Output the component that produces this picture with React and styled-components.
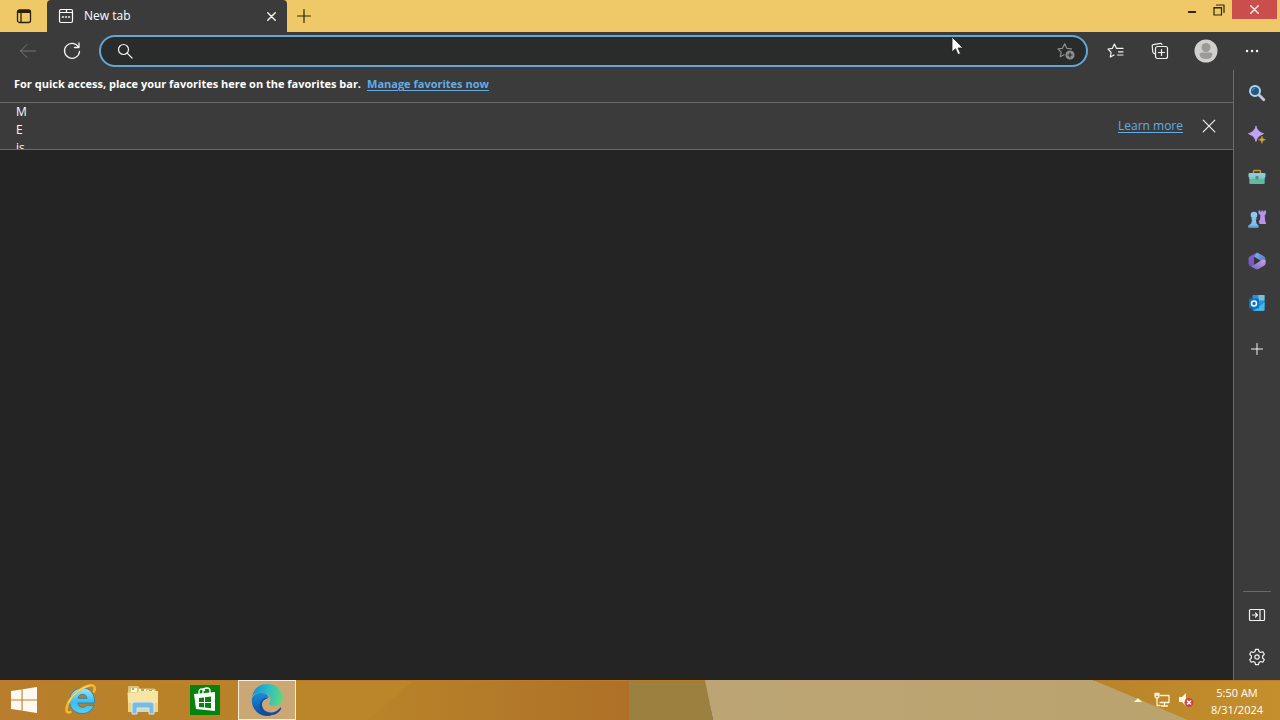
import React from 'react';
import styled, { createGlobalStyle } from 'styled-components';

const GlobalStyle = createGlobalStyle`
  *, *::before, *::after { box-sizing: border-box; }
  body {
    margin: 0;
    background: #242424;
    color: #fff;
    font: 12px/18px "Open Sans", "Noto Sans", sans-serif;
  }
  button, input { font: inherit; color: inherit; }
  svg { display: block; flex: none; }
`;

const Desktop = styled.div`
  display: flex;
  flex-direction: column;
  min-height: 100vh;
  position: relative;
`;

const IconButton = styled.button`
  display: flex;
  align-items: center;
  justify-content: center;
  flex: none;
  width: ${p => p.$w || 32}px;
  height: ${p => p.$h || 32}px;
  padding: 0;
  border: 0;
  background: ${p => p.$bg || 'transparent'};
  color: ${p => p.$color || '#f2f2f2'};
`;

const TabStrip = styled.header`
  display: flex;
  height: 32px;
  background: #efc867;
`;

const Tab = styled.div`
  display: flex;
  align-items: center;
  gap: 10px;
  width: 240px;
  padding-left: 11px;
  margin-right: 1px;
  border-radius: 4px 4px 0 0;
  background: #3b3b3b;
`;

const TabTitle = styled.span`
  flex: 1;
`;

const WindowControls = styled.div`
  display: flex;
  align-items: flex-start;
  margin-left: auto;
  padding-right: 3px;
`;

const Toolbar = styled.div`
  display: flex;
  align-items: center;
  height: 38px;
  padding: 0 6px;
  background: #3b3b3b;
`;

const NavButtons = styled.div`
  display: flex;
  width: 93px;
`;

const AddressBox = styled.div`
  display: flex;
  align-items: center;
  flex: 1;
  min-width: 0;
  height: 32px;
  padding: 0 4px 0 8px;
  border: 2px solid #65a7d4;
  border-radius: 16px;
  background: #2a2b2b;
`;

const AddressInput = styled.input`
  flex: 1;
  min-width: 0;
  height: 24px;
  border: 0;
  outline: 0;
  background: transparent;
`;

const ToolButtons = styled.div`
  display: flex;
  padding-left: 6px;
`;

const Body = styled.div`
  display: flex;
  flex: 1;
`;

const Page = styled.main`
  flex: 1;
  min-width: 0;
`;

const FavoritesBar = styled.div`
  display: flex;
  align-items: center;
  gap: 6px;
  height: 33px;
  padding: 0 14px 4px;
  border-bottom: 1px solid #6b6b6b;
  background: #3b3b3b;
  font-size: 11px;
  font-weight: 700;
`;

const Link = styled.a`
  color: #63ace5;
  text-decoration: underline;
  text-underline-offset: 2px;
`;

const InfoBar = styled.div`
  display: flex;
  align-items: center;
  height: 47px;
  padding: 0 8px 0 16px;
  border-bottom: 1px solid #6b6b6b;
  background: #3b3b3b;
  overflow: hidden;
`;

const InfoText = styled.p`
  align-self: flex-start;
  width: 12px;
  margin: 0 auto 0 0;
`;

const InfoLink = styled(Link)`
  margin-right: 10px;
`;

const Sidebar = styled.aside`
  display: flex;
  flex-direction: column;
  align-items: center;
  flex: none;
  width: 47px;
  padding: 2px 0;
  border-left: 1px solid #6b6b6b;
  background: #3b3b3b;
`;

const AppList = styled.nav`
  display: flex;
  flex-direction: column;
  margin-bottom: 4px;
`;

const SideFooter = styled.div`
  display: flex;
  flex-direction: column;
  align-items: center;
  margin-top: auto;
`;

const Divider = styled.hr`
  width: 28px;
  margin: 0 0 2px;
  border: 0;
  border-top: 1px solid #686868;
`;

const Taskbar = styled.footer`
  display: flex;
  position: relative;
  height: 40px;
`;

const Wallpaper = styled.svg`
  position: absolute;
  inset: 0;
  width: 100%;
  height: 100%;
`;

const TaskButtons = styled.div`
  display: flex;
  position: relative;
  gap: 4px;
`;

const TaskButton = styled.button`
  display: flex;
  align-items: center;
  justify-content: center;
  width: ${p => p.$w || 58}px;
  padding: 0;
  border: ${p => (p.$active ? '1px solid #f8eedc' : '0')};
  background: ${p => (p.$active ? '#cba776' : 'transparent')};
`;

const Tray = styled.div`
  display: flex;
  position: relative;
  align-items: center;
  margin-left: auto;
  padding-right: 4px;
`;

const Clock = styled.time`
  width: 78px;
  padding-top: 2px;
  text-align: center;
  font-size: 11px;
  line-height: 17px;
`;

const Pointer = styled.svg`
  position: absolute;
  left: 951px;
  top: 36px;
`;

function Line({ size = 18, box = 18, w = 1, children }) {
  return (
    <svg width={size} height={size} viewBox={`0 0 ${box} ${box}`} fill="none" stroke="currentColor"
      strokeWidth={w} strokeLinecap="round" strokeLinejoin="round" aria-hidden="true">
      {children}
    </svg>
  );
}

const Cross = ({ size, w }) => (
  <Line size={size} box={12} w={w}><path d="M1 1l10 10M11 1L1 11" /></Line>
);

function SearchColor() {
  return (
    <svg width="18" height="18" viewBox="0 0 18 18">
      <path d="M10.8 10.8l5 5" stroke="#c9c4dc" strokeWidth="2.8" strokeLinecap="round" />
      <circle cx="7" cy="7" r="5" fill="#2b567a" stroke="#a9d7f5" strokeWidth="2" />
      <path d="M4.5 7A2.6 2.6 0 0 1 7 4.4" stroke="#4da3dd" fill="none" />
    </svg>
  );
}

function Sparkle() {
  return (
    <svg width="18" height="18" viewBox="0 0 18 18">
      <path d="M8 0c.9 4 3 6.100 7.500 7.700C11 9.500 9 11.500 8 15.500 7 11.500 5 9.500.5 7.700 5 6.100 7.100 4 8 0z" fill="#c3a3f4" stroke="#c3a3f4" strokeWidth=".8" strokeLinejoin="round" />
      <path d="M14 10c.4 2.400 1.200 3.200 3.500 3.700-2.300.5-3.100 1.300-3.500 3.800-.4-2.500-1.200-3.300-3.500-3.800 2.300-.5 3.100-1.300 3.500-3.700z" fill="#c9a13a" stroke="#c9a13a" strokeWidth=".5" />
    </svg>
  );
}

function Toolbox() {
  return (
    <svg width="18" height="18" viewBox="0 0 18 18">
      <path d="M5.500 5V3.500Q5.500 2.500 6.500 2.500h5q1 0 1 1V5" fill="none" stroke="#b69b45" strokeWidth="1.500" />
      <rect x=".5" y="5" width="17" height="4.500" rx="1" fill="#90c9d8" />
      <path d="M1.300 9h15.400v6q0 1-1 1H2.300q-1 0-1-1z" fill="#62b99d" />
      <path d="M1.300 9h15.400v2H1.300z" fill="#7bc6c0" />
      <rect x="7.500" y="8" width="3" height="3.500" rx=".6" fill="#46977f" />
    </svg>
  );
}

function Games() {
  return (
    <svg width="18" height="18" viewBox="0 0 18 18">
      <path d="M10.500.5h1.800v1.300h1.200V.5h1.800v1.300h.9V.5H18v3.300l-1.300 1.400.5 6.300.8 1.200v1.300h-6.500L10.800 11l1.200-1 .4-4.800-1.900-1.700z" fill="#b993ea" />
      <circle cx="6" cy="5" r="3.300" fill="#8bcaf0" />
      <path d="M3.500 8h5v1.600H7.800l.7 4 1.900 1.800v2.100H.5v-2.100l2.700-1.800 1-4h-.7z" fill="#83c1ec" />
      <path d="M.5 15.500h9.900v2H.5z" fill="#5ba8df" />
    </svg>
  );
}

function Office() {
  return (
    <svg width="18" height="18" viewBox="0 0 18 18">
      <defs>
        <linearGradient id="officeTop" x1="0" y1="0" x2="0" y2="1">
          <stop offset="0" stopColor="#7a67cf" /><stop offset="1" stopColor="#7b4fba" />
        </linearGradient>
        <linearGradient id="officeLow" x1="0" y1="1" x2="1" y2="0">
          <stop offset="0" stopColor="#6d62c8" /><stop offset="1" stopColor="#cfa5de" />
        </linearGradient>
        <linearGradient id="officeRight" x1="0" y1="0" x2="1" y2="1">
          <stop offset="0" stopColor="#8cb9ee" /><stop offset="1" stopColor="#4567c4" />
        </linearGradient>
      </defs>
      <path d="M9 .5L2 4.300Q.5 5.200.5 7v4.200Q.5 13 2 13.900l3 1.600 1-1.500V4.500z" fill="url(#officeTop)" />
      <path d="M6 4.500L9 .5l7 3.800q1.500.9 1.500 2.700v4.500L12 8.500z" fill="url(#officeRight)" />
      <path d="M17.500 8v3.200q0 1.700-1.500 2.600l-5.500 3.300q-1.500.9-3 0L3 14.500l4-2.300L14.500 7.500z" fill="url(#officeLow)" />
      <path d="M6.500 5.500l5.700 3.200-5.700 3.300z" fill="#343445" />
    </svg>
  );
}

function Outlook() {
  return (
    <svg width="18" height="18" viewBox="0 0 18 18">
      <rect x="4.500" y="1" width="12" height="11" rx="1" fill="#2c91d8" />
      <path d="M10.500 1h6v5.500h-6z" fill="#79bfd7" />
      <path d="M4.500 8.500l6 3 6-3.500V16q0 1-1 1h-10q-1 0-1-1z" fill="#1688ca" />
      <path d="M16.500 8L6 16.800h9.500q1 0 1-1z" fill="#48b8e2" />
      <rect x="1" y="4.500" width="10" height="10" rx="1" fill="#0873c4" />
      <circle cx="6" cy="9.500" r="2.500" fill="none" stroke="#fff" strokeWidth="1.500" />
    </svg>
  );
}

const SIDE_APPS = [
  ['Search', SearchColor],
  ['Discover', Sparkle],
  ['Tools', Toolbox],
  ['Games', Games],
  ['Microsoft 365', Office],
  ['Outlook', Outlook],
];

function StartLogo() {
  return (
    <svg width="28" height="28" viewBox="0 0 28 28" fill="#fffaf0">
      <path d="M1 5l10.500-1.600v10H1zM12.600 3.200L27 1v12.400H12.600zM1 14.500h10.500v10L1 23zM12.600 14.500H27V27l-14.400-2.300z" />
    </svg>
  );
}

function InternetExplorer() {
  return (
    <svg width="32" height="32" viewBox="0 0 32 32">
      <defs>
        <linearGradient id="ieBlue" x1="0" y1="0" x2="0" y2="1">
          <stop offset="0" stopColor="#9be5fb" /><stop offset=".55" stopColor="#40bce9" /><stop offset="1" stopColor="#5ccdf0" />
        </linearGradient>
      </defs>
      <path d="M29.500 19H13c.3 2.800 2 4.300 4.500 4.300 2 0 3.200-.7 4-2h7.500C27 26.500 23 29.500 17.300 29.500 10 29.500 4.500 24.500 4.500 17S10 4 17.500 4c7.700 0 12.500 5.500 12 15zM13 14.300h9c-.4-2.600-2.100-4-4.500-4s-4 1.500-4.500 4z" fill="url(#ieBlue)" stroke="#207ead" strokeWidth=".8" />
      <path d="M5.500 28C1.500 30 .2 26.500 3 19.500 7 10.500 17 2.800 25 1.500c4.500-.8 5.500 2 4 6" fill="none" stroke="#f5b92e" strokeWidth="2.500" strokeLinecap="round" />
      <path d="M3.500 19C8 9.500 17 3.500 25 1.600" fill="none" stroke="#ffe58a" strokeWidth=".8" />
    </svg>
  );
}

function Explorer() {
  return (
    <svg width="32" height="32" viewBox="0 0 32 32">
      <path d="M1 3q0-1 1-1h9l2 2.500h14q2 0 2 2V27H1z" fill="#dfc272" />
      <path d="M4 4h6v4H4zM12 5h7v4h-7zM20 6h7v4h-7z" fill="#fff8df" />
      <path d="M5 5h2M14 6h3M22 7h3" stroke="#57a15d" strokeWidth="1.500" />
      <path d="M.5 8.500h10l2-1.500H31v21H1.500z" fill="#f7e5a1" />
      <path d="M1 19h30v9H1z" fill="#efd580" />
      <path d="M5 30v-9q0-3 3-3h16q3 0 3 3v9h-5v-6H10v6z" fill="#79bce3" stroke="#cfebf8" strokeWidth="1" />
      <path d="M11 25h10v3H11z" fill="#c1dce1" />
    </svg>
  );
}

function Store() {
  return (
    <svg width="30" height="30" viewBox="0 0 30 30">
      <path d="M0 0h30v30H0z" fill="#07820c" />
      <path d="M4 9l21-2v19L6 24z" fill="#fff" />
      <path d="M9 9V7q0-3 3-3 2 0 3 2M13 9V6q0-3 4-3 3 0 3 3v2" fill="none" stroke="#fff" strokeWidth="1.300" />
      <path d="M9 13l5-.6V17H9zM15 12.300l6-.8V17h-6zM9 18h5v4.500L9 22zM15 18h6v5.300l-6-.7z" fill="#07820c" />
    </svg>
  );
}

function Edge() {
  return (
    <svg width="34" height="34" viewBox="0 0 34 34">
      <defs>
        <linearGradient id="edgeTop" x1="0" y1=".4" x2="1" y2=".5">
          <stop offset="0" stopColor="#168ed9" /><stop offset=".5" stopColor="#2dbdc4" /><stop offset="1" stopColor="#63d778" />
        </linearGradient>
        <linearGradient id="edgeSide" x1="0" y1="0" x2="0" y2="1">
          <stop offset="0" stopColor="#188dde" /><stop offset="1" stopColor="#0a4d9a" />
        </linearGradient>
      </defs>
      <path d="M2 14C3.500 6 9 1 17 1c9 0 16 6 16 14 0 5-4 8-8.500 8-5 0-6-2-5-3.500 2-2.500 1-7.500-4-9C10 9 4 10 2 14z" fill="url(#edgeTop)" />
      <path d="M2 15c2-4.500 8-6.500 13-4.500 2 .8 3.500 2.500 4 4.500-3-1-7 2-7 7 0 6 5 10.500 11 9.500-2 1-4 1.500-6 1.500C8 33 .5 25 2 15z" fill="url(#edgeSide)" />
      <path d="M12 20c-1 7 6 11 12 9 3-1 4.500-2.500 6-4 1-1 1.500 0 1 1-2 4-7 7-13 6C10 31 7 22 12 17c2-2 4-2.500 6-1.500-3 .5-5.500 2-6 4.500z" fill="#124e9e" />
    </svg>
  );
}

function WallpaperArt() {
  return (
    <Wallpaper viewBox="0 0 1280 40" preserveAspectRatio="none" aria-hidden="true">
      <defs>
        <linearGradient id="goldLeft">
          <stop offset="0" stopColor="#b87d2d" /><stop offset=".22" stopColor="#b98229" />
          <stop offset=".6" stopColor="#b88329" /><stop offset="1" stopColor="#ae7027" />
        </linearGradient>
        <linearGradient id="sand"><stop offset="0" stopColor="#bca574" /><stop offset="1" stopColor="#baa36d" /></linearGradient>
        <linearGradient id="goldRight"><stop offset="0" stopColor="#b88429" /><stop offset="1" stopColor="#c58f2c" /></linearGradient>
      </defs>
      <path d="M0 0h631v40H0z" fill="url(#goldLeft)" />
      <path d="M296 0h118l-46 40h-72z" fill="#ba8629" />
      <path d="M629 0h77l7 40h-84z" fill="#9c803f" />
      <path d="M705 0h395l95 40H713z" fill="url(#sand)" />
      <path d="M1093 0h187v40h-92z" fill="url(#goldRight)" />
      <path d="M0 0h705v1H0zM1093 0h187v1h-187z" fill="#bd7b25" />
    </Wallpaper>
  );
}

export default function App() {
  return (
    <>
      <GlobalStyle />
      <Desktop>
        <TabStrip>
          <IconButton $w={47} $color="#2b2008" aria-label="Tab actions">
            <Line size={16} box={16} w={1.3}>
              <rect x="1.500" y="2" width="13" height="12.500" rx="2" />
              <path d="M2.500 3.500h11" strokeWidth="3" /><path d="M5 5v9" />
            </Line>
          </IconButton>
          <Tab>
            <Line size={16} box={16} w={1.2}>
              <path d="M3 1.500h10q1.500 0 1.500 1.500v10q0 1.500-1.500 1.500H3Q1.500 14.500 1.500 13V3Q1.500 1.500 3 1.500zM8.500 1.500v3h6M2 4.500h6.500" />
              <path d="M4.500 9h.8M7.600 9h.8M10.700 9h.8" strokeWidth="1.600" />
            </Line>
            <TabTitle>New tab</TabTitle>
            <IconButton aria-label="Close tab"><Cross size={9} w={1.9} /></IconButton>
          </Tab>
          <IconButton aria-label="New tab" $color="#30240c">
            <Line size={14} box={14} w={1.2}><path d="M7 .6v12.800M.6 7h12.800" /></Line>
          </IconButton>
          <WindowControls>
            <IconButton $w={26} $h={19} $color="#33260b" aria-label="Minimize">
              <Line size={14} box={14} w={2}><path d="M3 9h8" strokeLinecap="butt" /></Line>
            </IconButton>
            <IconButton $w={27} $h={19} $color="#33260b" aria-label="Restore">
              <Line size={12} box={12} w={1.2}><path d="M3.500 1h7.500v7.500M1 3.500h7.500V11H1z" /><path d="M1 4h7.500" /></Line>
            </IconButton>
            <IconButton $w={45} $h={19} $bg="#ca4e4c" $color="#f9dedd" aria-label="Close">
              <Cross size={9} w={2.2} />
            </IconButton>
          </WindowControls>
        </TabStrip>

        <Toolbar>
          <NavButtons>
            <IconButton $w={44} $color="#777" aria-label="Back">
              <Line><path d="M16.500 9h-15M8 2.500L1.500 9 8 15.500" /></Line>
            </IconButton>
            <IconButton $w={44} aria-label="Refresh">
              <Line w={1.3}><path d="M15.500 5A7.500 7.500 0 1 0 16.500 9.500M16 1v4.500h-4.500" /></Line>
            </IconButton>
          </NavButtons>
          <AddressBox>
            <IconButton $h={28} aria-label="Search">
              <Line size={16} box={16} w={1.2}><circle cx="6.500" cy="6.500" r="5" /><path d="M10.200 10.200l4.800 4.800" /></Line>
            </IconButton>
            <AddressInput aria-label="Address and search bar" />
            <IconButton $h={28} $color="#8e8e8e" aria-label="Add to favorites">
              <Line w={1.2}>
                <path d="M7 12.700l-3.700 2 .8-4.600L1 6.900l4.500-.6 2.200-4.500 2.100 4.500 4.700.6" />
                <circle cx="13" cy="13" r="4" fill="#8e8e8e" /><path d="M13 11v4M11 13h4" stroke="#292929" />
              </Line>
            </IconButton>
          </AddressBox>
          <ToolButtons>
            <IconButton $w={44} aria-label="Favorites">
              <Line w={1.2}>
                <path d="M7 13l-3.700 2 .8-4.700L1 7l4.300-.6 2.100-4.300 2.100 4.300h6.500M11.500 9.800h4.500M10.500 13H16" />
              </Line>
            </IconButton>
            <IconButton $w={44} aria-label="Collections">
              <Line w={1.2}>
                <path d="M4 11.800l-1-.4Q2 11 1.800 10L1.200 4Q1 2.800 2.200 2.600L9.500 1.300q1-.1 1.500 1.200" />
                <rect x="4.500" y="4.500" width="12" height="12" rx="2" /><path d="M10.500 7.500v6M7.500 10.500h6" />
              </Line>
            </IconButton>
            <IconButton $w={48} aria-label="Profile">
              <svg width="24" height="24" viewBox="0 0 24 24">
                <circle cx="12" cy="12" r="11.500" fill="#d1d0ce" />
                <circle cx="12" cy="8.500" r="4.500" fill="#9b9a99" />
                <path d="M5.500 15.500q0-2 2-2h9q2 0 2 2c-.5 3-3 4.500-6.500 4.500s-6-1.500-6.500-4.500z" fill="#9b9a99" />
              </svg>
            </IconButton>
            <IconButton $w={44} aria-label="Settings and more">
              <Line w={2.4}><path d="M4 9h.1M9 9h.1M14 9h.1" /></Line>
            </IconButton>
          </ToolButtons>
        </Toolbar>

        <Body>
          <Page>
            <FavoritesBar>
              <span>For quick access, place your favorites here on the favorites bar.</span>
              <Link href="#favorites">Manage favorites now</Link>
            </FavoritesBar>
            <InfoBar>
              <InfoText>M E is</InfoText>
              <InfoLink href="#learn">Learn more</InfoLink>
              <IconButton aria-label="Dismiss"><Cross size={14} w={1} /></IconButton>
            </InfoBar>
          </Page>
          <Sidebar>
            <AppList>
              {SIDE_APPS.map(([name, Icon]) => (
                <IconButton key={name} $w={46} $h={42} aria-label={name}><Icon /></IconButton>
              ))}
            </AppList>
            <IconButton $w={46} $h={42} aria-label="Customize">
              <Line size={14} box={14}><path d="M7 1.500v11M1.500 7h11" /></Line>
            </IconButton>
            <SideFooter>
              <Divider />
              <IconButton $w={46} $h={42} aria-label="Hide sidebar">
                <Line w={1.2}>
                  <rect x="1.500" y="3.500" width="15" height="11" rx="1" />
                  <path d="M12 3.500v11M4.500 9h5M7.500 7l2 2-2 2" />
                </Line>
              </IconButton>
              <IconButton $w={46} $h={42} aria-label="Settings">
                <Line w={1.2}>
                  <path d="M7.500 1.300h3l.5 2.300 1.600.9 2.200-.8 1.500 2.600L14.600 8v2l1.700 1.700-1.500 2.600-2.200-.8-1.600.9-.5 2.300h-3L7 14.400l-1.600-.9-2.200.8-1.500-2.600L3.400 10V8L1.700 6.300l1.500-2.600 2.200.8L7 3.600z" />
                  <circle cx="9" cy="9" r="2.200" />
                </Line>
              </IconButton>
            </SideFooter>
          </Sidebar>
        </Body>

        <Taskbar>
          <WallpaperArt />
          <TaskButtons>
            <TaskButton $w={48} aria-label="Start"><StartLogo /></TaskButton>
            <TaskButton aria-label="Internet Explorer"><InternetExplorer /></TaskButton>
            <TaskButton aria-label="File Explorer"><Explorer /></TaskButton>
            <TaskButton aria-label="Store"><Store /></TaskButton>
            <TaskButton $active aria-label="Microsoft Edge"><Edge /></TaskButton>
          </TaskButtons>
          <Tray>
            <IconButton $w={24} aria-label="Show hidden icons">
              <svg width="10" height="6" viewBox="0 0 10 6"><path d="M1 5l4-4 4 4z" fill="#fff5df" /></svg>
            </IconButton>
            <IconButton $w={24} $color="#fff5df" aria-label="Network">
              <Line size={16} box={16} w={1.3}>
                <path d="M6.500 3.500H15v7H6M10.500 11v2.500M7.500 14h6M3 6v7.500h3M1 1.500v2Q1 6 3 6t2-2.500v-2zM1 3h4" />
              </Line>
            </IconButton>
            <IconButton $w={24} aria-label="Volume muted">
              <svg width="16" height="16" viewBox="0 0 16 16">
                <path d="M1 5h3l4-4v13l-4-4H1z" fill="#fff7e8" />
                <circle cx="11" cy="10.500" r="4.500" fill="#ce4540" />
                <path d="M9 8.500l4 4M13 8.500l-4 4" stroke="#fff" strokeWidth="1.500" />
              </svg>
            </IconButton>
            <Clock>5:50 AM<br />8/31/2024</Clock>
          </Tray>
        </Taskbar>
        <Pointer width="14" height="20" viewBox="0 0 14 20" aria-hidden="true">
          <path d="M1 1v15l3.500-3.300L7 18.500l2.500-1L7 12h5z" fill="#fff" stroke="#222" strokeWidth=".8" />
        </Pointer>
      </Desktop>
    </>
  );
}
